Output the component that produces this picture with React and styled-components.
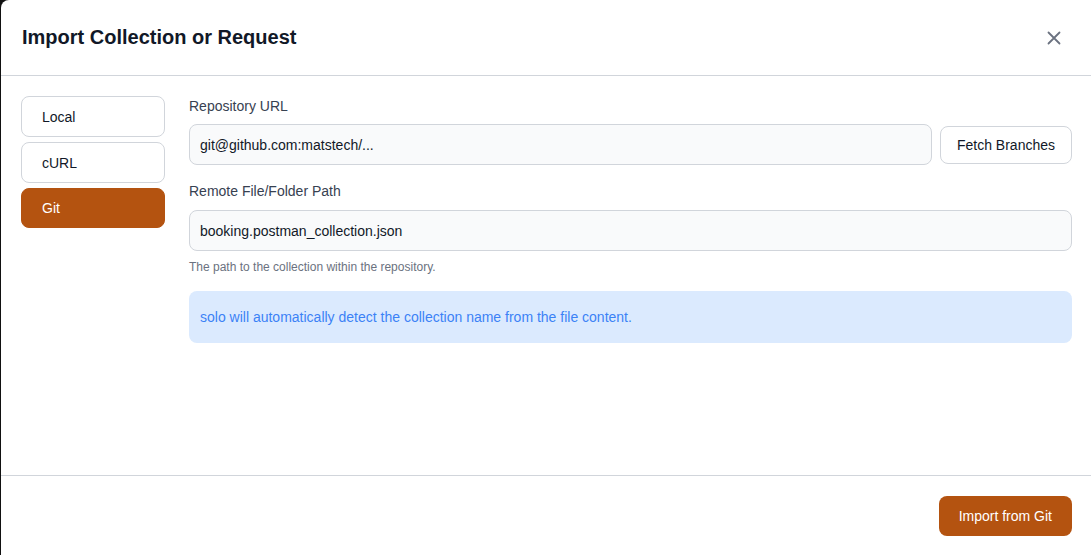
import styled, { createGlobalStyle } from 'styled-components';

const GlobalStyle = createGlobalStyle`
  html, body {
    margin: 0;
    padding: 0;
    background: #111;
    font-family: "Liberation Sans", Arial, sans-serif;
  }
  * { box-sizing: border-box; }
`;

const Dialog = styled.div`
  margin-left: 1px;
  height: 555px;
  background: #fff;
  border-radius: 8px 0 0 0;
  display: flex;
  flex-direction: column;
`;

const Header = styled.div`
  height: 76px;
  padding: 0 21px;
  display: flex;
  align-items: center;
  justify-content: space-between;
  border-bottom: 1px solid #d1d5db;
`;

const Title = styled.h2`
  margin: 0;
  font-size: 20px;
  font-weight: 700;
  color: #111827;
`;

const CloseButton = styled.button`
  border: none;
  background: none;
  padding: 0;
  width: 24px;
  height: 24px;
  display: flex;
  align-items: center;
  justify-content: center;
  color: #6b7280;
  cursor: pointer;
  margin-right: 4px;
`;

const Body = styled.div`
  flex: 1;
  display: flex;
  gap: 24px;
  padding: 20px 19px 0 20px;
`;

const Nav = styled.div`
  width: 144px;
  display: flex;
  flex-direction: column;
  gap: 5px;
`;

const NavItem = styled.button`
  height: ${(p) => (p.$active ? '40px' : '41px')};
  text-align: left;
  padding: 0 20px;
  border-radius: 8px;
  font-family: inherit;
  font-size: 14px;
  border: 1px solid ${(p) => (p.$active ? '#b45310' : '#d1d5db')};
  background: ${(p) => (p.$active ? '#b45310' : '#fff')};
  color: ${(p) => (p.$active ? '#fff' : '#111827')};
`;

const Content = styled.div`
  flex: 1;
  display: flex;
  flex-direction: column;
`;

const Label = styled.label`
  font-size: 14px;
  line-height: 20px;
  color: #374151;
  margin-bottom: ${(p) => p.$mb || 8}px;
`;

const Row = styled.div`
  display: flex;
  align-items: center;
  gap: 8px;
  margin-bottom: 16px;
`;

const Input = styled.div`
  flex: ${(p) => (p.$fill ? 1 : 'none')};
  height: 41px;
  display: flex;
  align-items: center;
  padding: 0 10px;
  background: #f9fafb;
  border: 1px solid #d1d5db;
  border-radius: 8px;
  font-size: 14px;
  color: #111827;
`;

const GhostButton = styled.button`
  height: 38px;
  padding: 0 16px;
  border: 1px solid #d1d5db;
  background: #fff;
  border-radius: 8px;
  font-family: inherit;
  font-size: 14px;
  color: #111827;
`;

const Help = styled.p`
  margin: 8px 0 16px;
  font-size: 12px;
  line-height: 16px;
  color: #6b7280;
`;

const Info = styled.div`
  height: 52px;
  display: flex;
  align-items: center;
  padding: 0 11px;
  background: #dbeafe;
  border-radius: 8px;
  font-size: 14px;
  color: #3b82f6;
`;

const Footer = styled.div`
  height: 80px;
  border-top: 1px solid #d1d5db;
  display: flex;
  align-items: center;
  justify-content: flex-end;
  padding: 0 19px;
`;

const PrimaryButton = styled.button`
  height: 40px;
  padding: 0 20px;
  border: none;
  border-radius: 8px;
  background: #b45310;
  color: #fff;
  font-family: inherit;
  font-size: 14px;
  font-weight: 500;
`;

const App = () => {
  return (
    <>
      <GlobalStyle />
      <Dialog>
        <Header>
          <Title>Import Collection or Request</Title>
          <CloseButton aria-label="Close">
            <svg width="16" height="16" viewBox="0 0 16 16" fill="none" stroke="currentColor" strokeWidth="1.8" strokeLinecap="round">
              <path d="M2.5 2.5l11 11M13.5 2.5l-11 11" />
            </svg>
          </CloseButton>
        </Header>
        <Body>
          <Nav>
            <NavItem>Local</NavItem>
            <NavItem>cURL</NavItem>
            <NavItem $active>Git</NavItem>
          </Nav>
          <Content>
            <Label>Repository URL</Label>
            <Row>
              <Input $fill>git@github.com:matstech/...</Input>
              <GhostButton>Fetch Branches</GhostButton>
            </Row>
            <Label $mb={9}>Remote File/Folder Path</Label>
            <Input>booking.postman_collection.json</Input>
            <Help>The path to the collection within the repository.</Help>
            <Info>solo will automatically detect the collection name from the file content.</Info>
          </Content>
        </Body>
        <Footer>
          <PrimaryButton>Import from Git</PrimaryButton>
        </Footer>
      </Dialog>
    </>
  );
};

export default App;
